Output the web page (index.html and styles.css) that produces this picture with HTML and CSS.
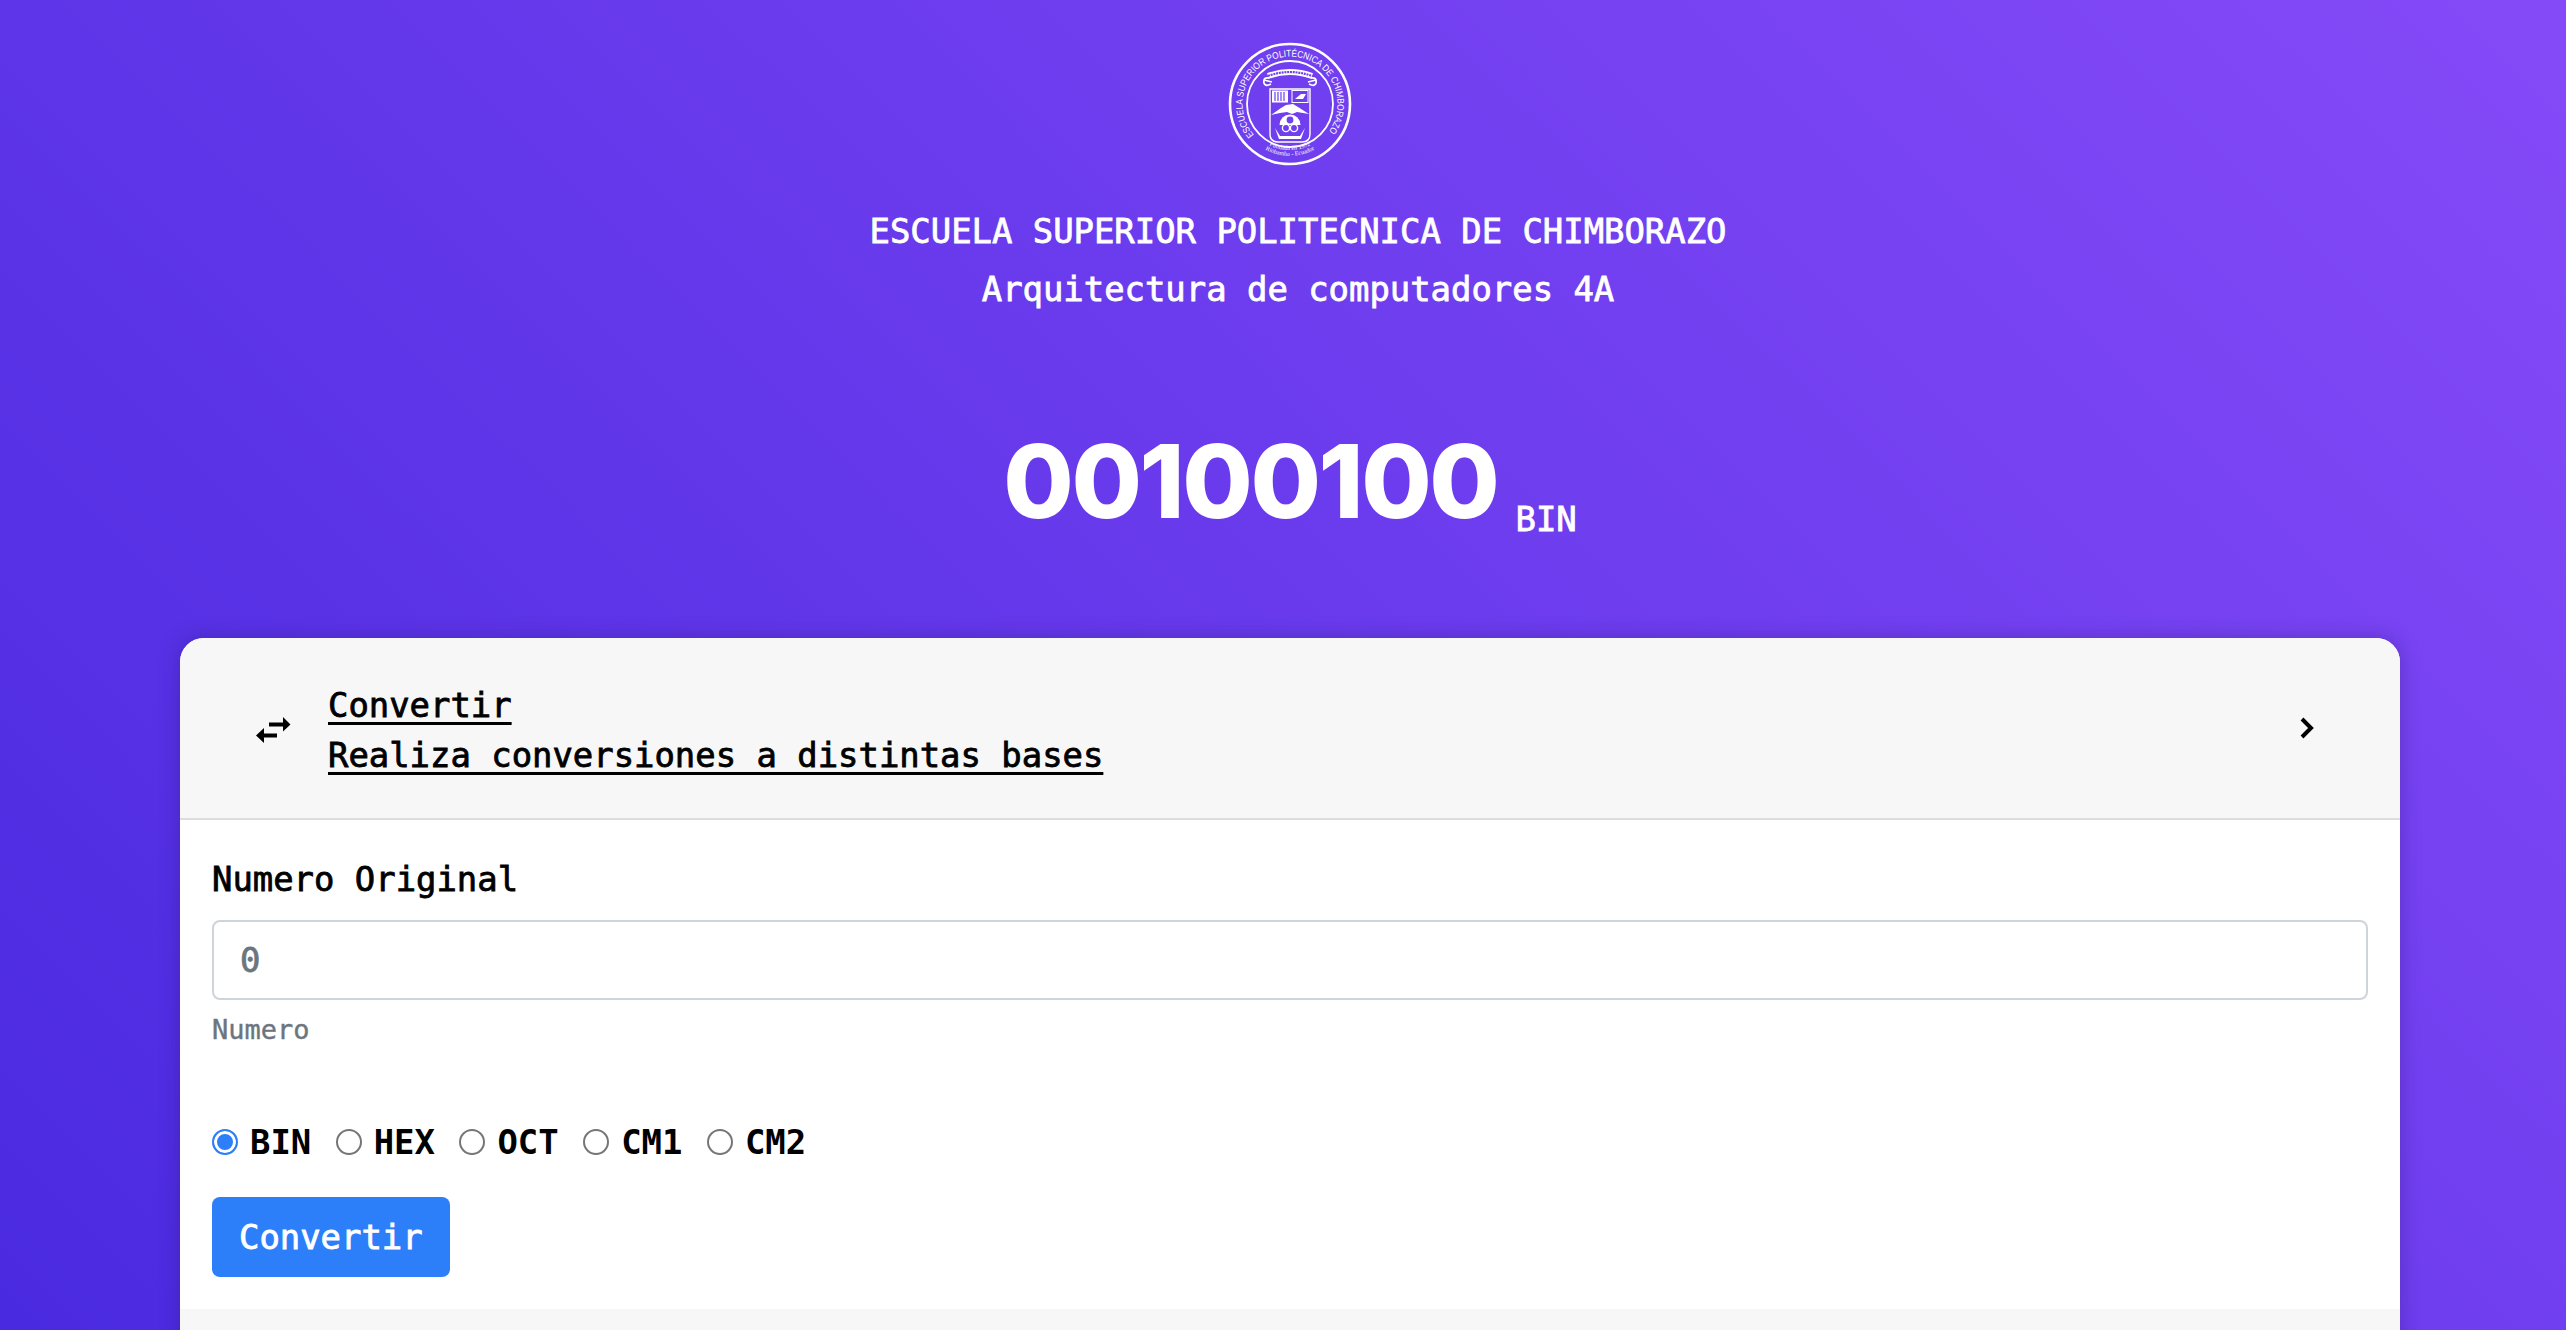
FILE: index.html
```html
<!DOCTYPE html>
<html lang="es">
<head>
<meta charset="utf-8">
<title>Conversor de bases</title>
<link rel="stylesheet" href="styles.css">
</head>
<body>
<main class="page">
  <header class="hero">
    <svg class="logo" viewBox="-65 -65 130 130" aria-hidden="true">
      <defs>
        <path id="ring" d="M -36 31 A 47.5 47.5 0 1 1 36 31"/>
        <path id="base1" d="M -30 35 A 46 46 0 0 0 30 35"/>
        <path id="base2" d="M -32 41 A 53 53 0 0 0 32 41"/>
        <clipPath id="shield"><path d="M-20 -15H20V30Q20 38 12 38H-12Q-20 38 -20 30Z"/></clipPath>
      </defs>
      <g fill="none" stroke="#fff">
        <circle r="60" stroke-width="2.6"/>
        <circle r="43" stroke-width="1.8"/>
        <path d="M-22 -28Q0 -36 22 -28" stroke-width="6"/>
        <path d="M-22 -28Q0 -36 22 -28" stroke="#6d40f0" stroke-width="2.2" stroke-dasharray="2 .8"/>
        <path d="M-21 -26Q-27 -27 -26 -21Q-25 -17 -19 -20M21 -26Q27 -27 26 -21Q25 -17 19 -20" stroke-width="1.8"/>
        <path d="M-26 -24L-18 -22M26 -24L18 -22" stroke-width="1.6"/>
        <path d="M-20 -15H20V30Q20 38 12 38H-12Q-20 38 -20 30Z" stroke-width="1.4"/>
      </g>
      <text class="logo-ring"><textPath href="#ring" textLength="212" lengthAdjust="spacingAndGlyphs">ESCUELA SUPERIOR POLITÉCNICA DE CHIMBORAZO</textPath></text>
      <g fill="#fff" clip-path="url(#shield)">
        <rect x="-18" y="-13.5" width="16" height="12"/>
        <rect x="2" y="-13.5" width="16" height="12" fill="none" stroke="#fff"/>
        <path d="M5 -5L11 -10L16 -10L13 -5Z"/>
        <path d="M-19 11L-9 4L-4 1L3 0L8 3L19 10L7 8L2 10L-3 8L-10 9Z"/>
        <path d="M-10.5 21A10.5 10.5 0 0 1 10.5 21Z"/>
        <path d="M-15 24L-11 35H11L15 24L10 32H-10Z"/>
      </g>
      <g fill="none" stroke="#fff" stroke-width="1.4">
        <circle cx="-4" cy="24" r="3.6"/>
        <circle cx="4" cy="24" r="3.6"/>
      </g>
      <circle cy="16" r="3.4" fill="#6d40f0"/>
      <path d="M-15 -12V-3M-12 -12V-3M-9 -12V-3M-6 -12V-3" stroke="#6d40f0" stroke-width="1.2"/>
      <text class="logo-small"><textPath href="#base1" startOffset="50%" text-anchor="middle">Fundada en 1972</textPath></text>
      <text class="logo-small"><textPath href="#base2" startOffset="50%" text-anchor="middle">Riobamba - Ecuador</textPath></text>
    </svg>
    <h1 class="school">ESCUELA SUPERIOR POLITECNICA DE CHIMBORAZO</h1>
    <p class="course">Arquitectura de computadores 4A</p>
    <div class="result"><span class="result-value">00100100</span><span class="result-base">BIN</span></div>
  </header>

  <section class="card">
    <a class="card-head" href="#">
      <svg class="swap-icon" viewBox="0 0 36 28" aria-hidden="true">
        <path d="M14 6.5H28V1L35.5 8.5L28 15.5V10.5H14Z"/>
        <path d="M22 17.5H9V12L1 19.5L9 27V21.500H22Z"/>
      </svg>
      <span class="head-text"><span>Convertir</span><span>Realiza conversiones a distintas bases</span></span>
      <svg class="chevron" viewBox="0 0 14 22" aria-hidden="true"><path d="M2 2L11 11L2 20" fill="none" stroke="#000" stroke-width="4"/></svg>
    </a>
    <form class="card-body">
      <label class="field-label" for="numero">Numero Original</label>
      <input class="field-input" id="numero" type="text" placeholder="0">
      <small class="field-help">Numero</small>
      <div class="radios">
        <label class="radio"><input type="radio" name="base" checked>BIN</label>
        <label class="radio"><input type="radio" name="base">HEX</label>
        <label class="radio"><input type="radio" name="base">OCT</label>
        <label class="radio"><input type="radio" name="base">CM1</label>
        <label class="radio"><input type="radio" name="base">CM2</label>
      </div>
      <button class="submit" type="button">Convertir</button>
    </form>
    <div class="card-foot"></div>
  </section>
</main>
</body>
</html>
```
FILE: styles.css
```css
* { box-sizing: border-box; }
html, body { margin: 0; height: 100%; overflow: hidden; }
body {
  font-family: "DejaVu Sans Mono", "Liberation Mono", monospace;
  font-size: 33.9px;
  color: #000;
  -webkit-text-stroke: 0.8px currentColor;
  background: linear-gradient(45deg, #4a2ae0, #854af8);
}
.page { height: 1330px; padding: 39px 166px 0 180px; overflow: hidden; }
.hero { display: flex; flex-direction: column; align-items: center; color: #fff; }
.logo { display: block; width: 130px; height: 130px; margin-bottom: 34px; -webkit-text-stroke: 0; }
.logo-ring { font: 9.5px "Liberation Sans", sans-serif; fill: #fff; }
.logo-small { font: 6.2px "Liberation Serif", serif; fill: #fff; }
.school, .course { margin: 0; padding-left: 16px; font-size: 33.9px; font-weight: 400; line-height: 58px; }
.result { margin-top: 111px; height: 208px; white-space: nowrap; line-height: 1; }
.result-value { font-family: Inter, sans-serif; font-weight: 800; font-size: 102px; letter-spacing: -2.4px; -webkit-text-stroke: 0; }
.result-base { margin-left: 18px; vertical-align: -13px; }
.card { background: #fff; border-radius: 24px 24px 0 0; box-shadow: 0 0 20px rgba(40, 20, 110, .35); overflow: hidden; }
.card-head {
  display: flex; align-items: center; height: 182px; padding: 0 86px 0 75px;
  background: #f7f7f7; border-bottom: 2px solid #dcdcdc; color: #000; text-decoration: none;
}
.swap-icon { width: 36px; height: 28px; margin: 4px 37px 0 0; flex: none; }
.head-text { display: flex; flex-direction: column; flex: 1; margin-top: 6px; line-height: 50px; text-decoration: underline; text-decoration-thickness: 3px; text-underline-offset: 5px; }
.chevron { width: 14px; height: 22px; flex: none; }
.card-body { display: flex; flex-direction: column; align-items: flex-start; padding: 35px 32px 32px; }
.field-label { line-height: 50px; font-weight: 400; }
.field-input {
  width: 100%; height: 80px; margin-top: 15px; padding: 0 26px;
  font: inherit; border: 2px solid #ced4da; border-radius: 8px; background: #fff;
}
.field-input::placeholder { color: #6c757d; opacity: 1; }
.field-help { margin-top: 10px; font-size: 27px; line-height: 40px; color: #6c757d; -webkit-text-stroke: 0.4px currentColor; }
.radios { display: flex; gap: 24.5px; margin-top: 68px; }
.radio { display: flex; align-items: center; gap: 12px; font-weight: 700; line-height: 50px; -webkit-text-stroke: 0; }
.radio input {
  appearance: none; width: 26px; height: 26px; margin: 0 0 2px;
  border: 2px solid #767676; border-radius: 50%; background: #fff;
}
.radio input:checked { border-color: #2d7ff9; background: #2d7ff9; box-shadow: inset 0 0 0 3px #fff; }
.submit {
  height: 80px; margin-top: 29px; padding: 0 27px; font: inherit; color: #fff;
  background: #2d7ff9; border: 0; border-radius: 8px;
}
.card-foot { height: 100px; background: #f7f7f7; }
```
